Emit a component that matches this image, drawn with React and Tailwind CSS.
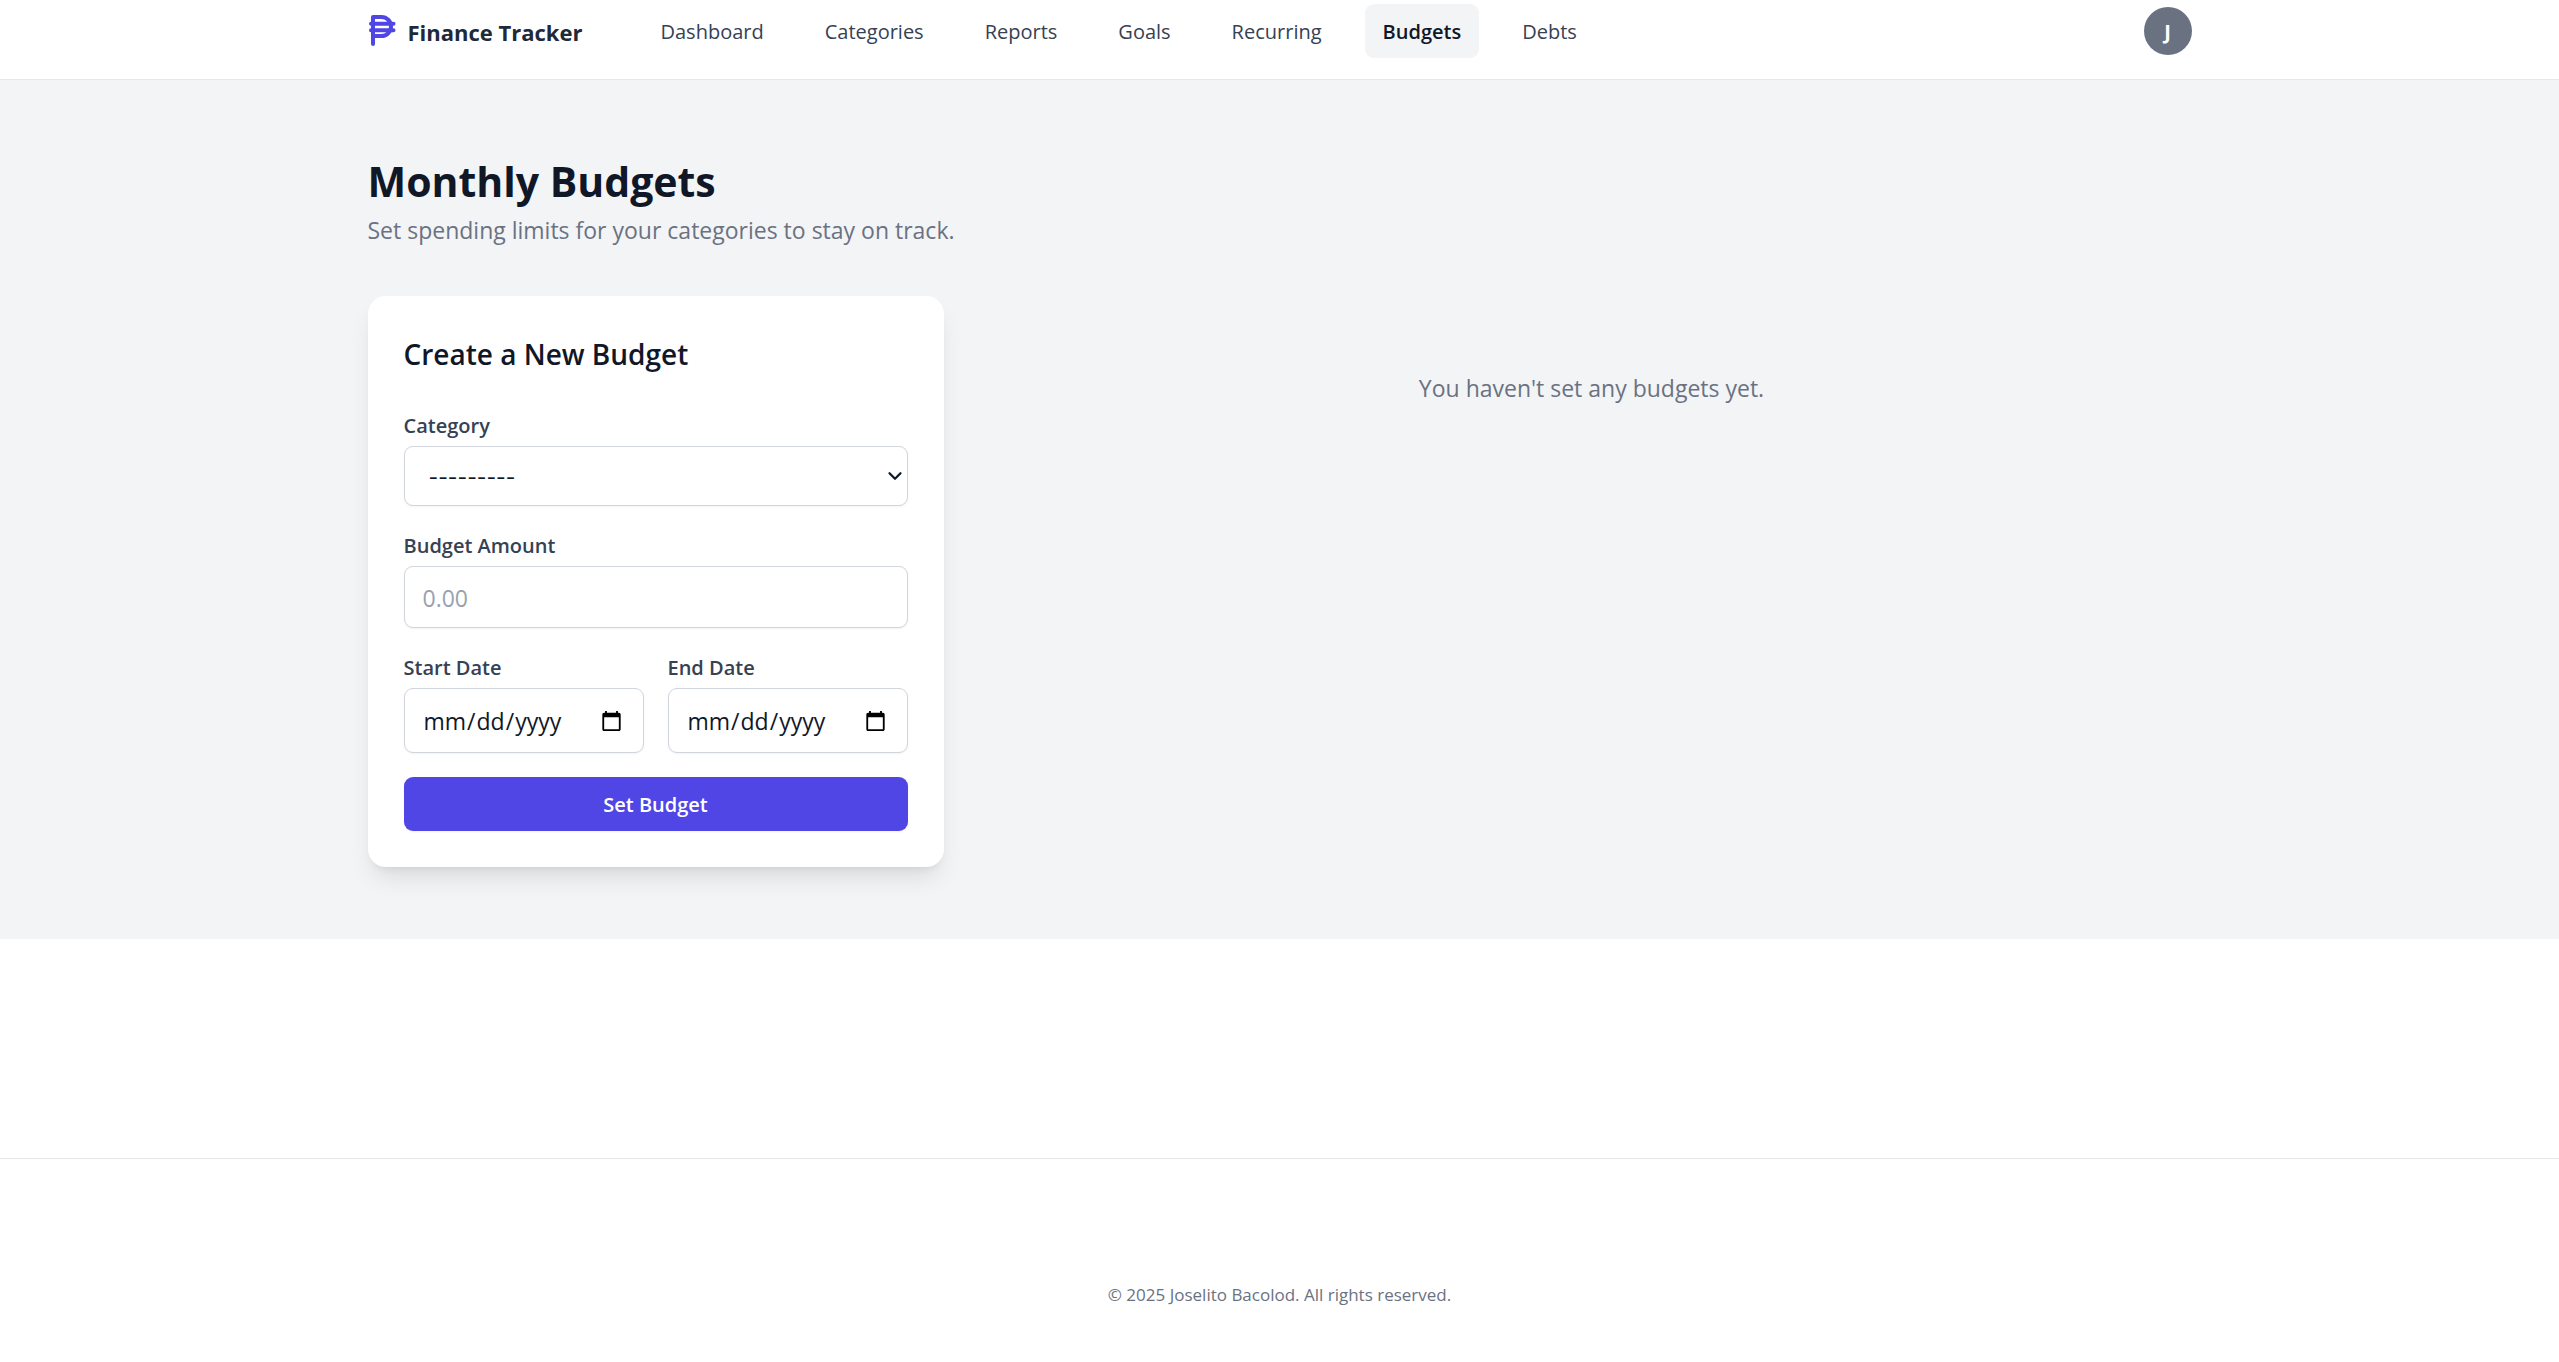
import React, { useState } from "react";
import { ChevronDown } from "lucide-react";

const navLinks = [
  "Dashboard",
  "Categories",
  "Reports",
  "Goals",
  "Recurring",
  "Budgets",
  "Debts",
];

const labelClass =
  "block text-[20px] leading-[32px] font-semibold text-gray-700";
const fieldClass =
  "mt-1 block w-full rounded-[9px] border border-gray-300 bg-white px-[18px] text-gray-900 shadow-xs placeholder:text-gray-400 focus:outline-none focus:ring-2 focus:ring-[#4f46e5]";

const PesoLogo = () => (
  <svg
    viewBox="-1 0 28 32"
    className="h-8 w-7 text-[#4f46e5]"
    fill="none"
    stroke="currentColor"
    strokeWidth="4"
    strokeLinecap="round"
    strokeLinejoin="round"
    aria-hidden="true"
  >
    <path d="M4 29V2h8.5a9.5 9.5 0 0 1 0 19H4" />
    <path d="M2 8.7h22.5M2 15.3h22.5" />
  </svg>
);

const Navbar = ({ active }) => (
  <header className="border-b border-gray-200 bg-white">
    <div className="mx-auto flex max-w-[1920px] items-center px-12 pt-1 pb-[21px]">
      <a href="#" className="flex items-center gap-3">
        <PesoLogo />
        <span className="pt-0.5 text-[22px] leading-[36px] font-bold text-gray-800">
          Finance Tracker
        </span>
      </a>
      <nav className="ml-[60px] flex gap-[25px]">
        {navLinks.map((link) => (
          <a
            key={link}
            href="#"
            className={
              link === active
                ? "rounded-[9px] bg-gray-100 px-[18px] pt-[13px] pb-[11px] text-[20px] leading-[30px] font-semibold text-gray-900"
                : "rounded-[9px] px-[18px] pt-[13px] pb-[11px] text-[20px] leading-[30px] font-medium text-gray-700 hover:bg-gray-100"
            }
          >
            {link}
          </a>
        ))}
      </nav>
      <button
        type="button"
        aria-label="Account menu"
        className="ml-auto flex h-12 w-12 items-center justify-center rounded-full bg-gray-500 pt-0.5 text-[20px] leading-[30px] font-bold text-white"
      >
        J
      </button>
    </div>
  </header>
);

const BudgetForm = () => {
  const [formData, setFormData] = useState({
    category: "",
    amount: "",
    startDate: "",
    endDate: "",
  });

  const handleChange = (e) =>
    setFormData({ ...formData, [e.target.name]: e.target.value });

  return (
    <section className="rounded-[18px] bg-white p-9 shadow-[0_15px_23px_-5px_rgb(0_0_0/0.1),0_6px_9px_-6px_rgb(0_0_0/0.1)]">
      <h2 className="mb-[34px] text-[28px] leading-[44px] font-semibold text-gray-900">
        Create a New Budget
      </h2>
      <form className="space-y-6" onSubmit={(e) => e.preventDefault()}>
        <div>
          <label htmlFor="category" className={labelClass}>
            Category
          </label>
          <div className="relative">
            <select
              id="category"
              name="category"
              value={formData.category}
              onChange={handleChange}
              className={`${fieldClass} h-[60px] appearance-none pt-1 pl-6 font-[Inter,sans-serif] text-[21px]`}
            >
              <option value="">---------</option>
            </select>
            <ChevronDown
              className="pointer-events-none absolute top-[19px] right-0.5 h-[22px] w-[22px] text-gray-900"
              strokeWidth={2.5}
            />
          </div>
        </div>

        <div>
          <label htmlFor="amount" className={labelClass}>
            Budget Amount
          </label>
          <input
            id="amount"
            name="amount"
            type="number"
            placeholder="0.00"
            value={formData.amount}
            onChange={handleChange}
            className={`${fieldClass} h-[62px] pt-0.5 text-[23px]`}
          />
        </div>

        <div className="grid grid-cols-2 gap-6">
          <div>
            <label htmlFor="startDate" className={labelClass}>
              Start Date
            </label>
            <input
              id="startDate"
              name="startDate"
              type="date"
              value={formData.startDate}
              onChange={handleChange}
              className={`${fieldClass} h-[65px] pt-0.5 text-[23px]`}
            />
          </div>
          <div>
            <label htmlFor="endDate" className={labelClass}>
              End Date
            </label>
            <input
              id="endDate"
              name="endDate"
              type="date"
              value={formData.endDate}
              onChange={handleChange}
              className={`${fieldClass} h-[65px] pt-0.5 text-[23px]`}
            />
          </div>
        </div>

        <button
          type="submit"
          className="w-full rounded-[9px] bg-[#4f46e5] pt-[13px] pb-[11px] text-[20px] leading-[30px] font-semibold text-white shadow-xs hover:bg-[#4338ca]"
        >
          Set Budget
        </button>
      </form>
    </section>
  );
};

const App = () => {
  return (
    <div className="flex min-h-screen flex-col bg-white font-['Open_Sans',sans-serif]">
      <Navbar active="Budgets" />

      <main className="bg-gray-100 py-[72px]">
        <div className="mx-auto max-w-[1920px] px-12">
          <h1 className="text-[41px] leading-[58px] font-bold text-gray-900">
            Monthly Budgets
          </h1>
          <p className="text-[23px] leading-[40px] text-gray-500">
            Set spending limits for your categories to stay on track.
          </p>

          <div className="mt-[46px] grid grid-cols-3 items-start gap-12">
            <BudgetForm />
            <div className="col-span-2 py-[72px] text-center">
              <p className="text-[23px] leading-[40px] text-gray-500">
                You haven't set any budgets yet.
              </p>
            </div>
          </div>
        </div>
      </main>

      <footer className="mt-auto border-t border-gray-200 pt-[122px] pb-[53px] text-center">
        <p className="text-[17px] leading-[28px] text-gray-500">
          © 2025 Joselito Bacolod. All rights reserved.
        </p>
      </footer>
    </div>
  );
};

export default App;
